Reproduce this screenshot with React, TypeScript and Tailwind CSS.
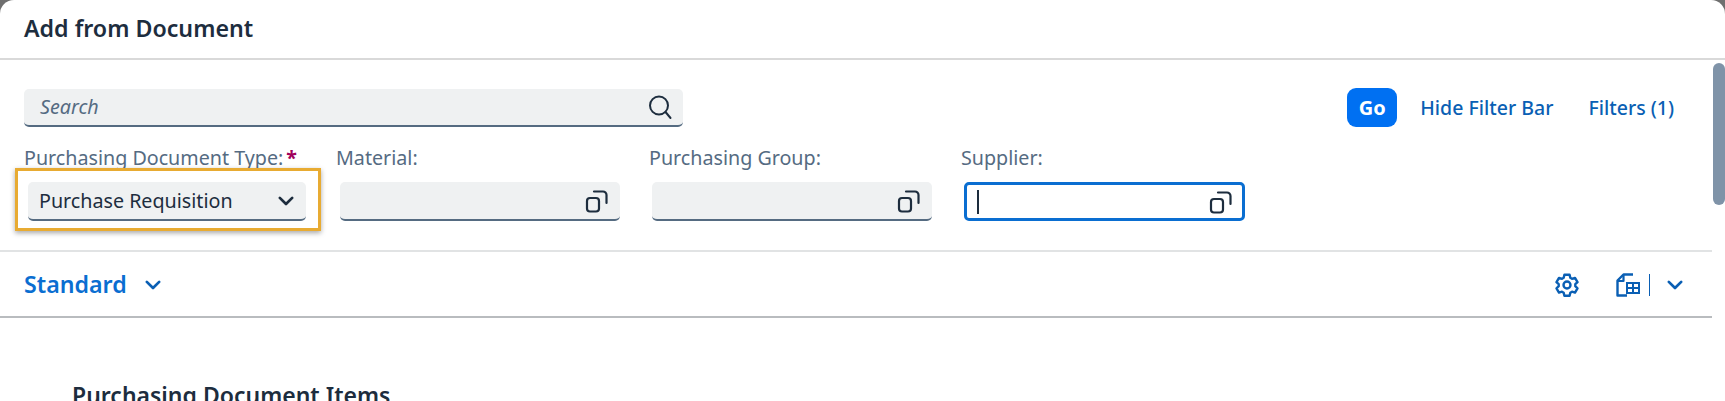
const FONT = "font-['Noto_Sans','Open_Sans',sans-serif]";

function ValueHelpIcon() {
    return (
        <svg width="24" height="24" viewBox="0 0 24 24" fill="none" stroke="#1d2d3e" strokeWidth="2.200" className="block">
            <rect x="2" y="9" width="12" height="13.500" rx="3" />
            <path d="M9 2.500h9a3.500 3.500 0 0 1 3.500 3.500V14" strokeLinecap="round" />
        </svg>
    );
}

function Chevron({ color, size = 16 }: { color: string; size?: number }) {
    return (
        <svg width={size} height={size} viewBox="0 0 16 16" fill="none" className="block">
            <path d="M2.500 5.200L8 10.700l5.500-5.500" stroke={color} strokeWidth="2.400" strokeLinecap="round" strokeLinejoin="round" />
        </svg>
    );
}

function GearIcon() {
    return (
        <svg width="24" height="24" viewBox="0 0 24 24" fill="none" stroke="#0a5fb4" strokeWidth="2.400" strokeLinejoin="round" className="block">
            <path d="M9.400 1.800h5.200l.7 3 1.700 1 3-.9 2.500 4.200-2.200 2.100v2l2.200 2.100-2.500 4.300-3-.9-1.700 1-.7 3H9.400l-.7-3-1.700-1-3 .9-2.500-4.300 2.200-2.100v-2L1.500 9.100 4 4.900l3 .9 1.700-1z" />
            <circle cx="12" cy="12" r="3.500" />
        </svg>
    );
}

function ExportTableIcon() {
    return (
        <svg width="24" height="24" viewBox="0 0 24 24" fill="none" stroke="#0a5fb4" className="block">
            <path d="M17 1.500H7.500L1.500 7.500V22.500H11" strokeWidth="2.400" strokeLinejoin="round" />
            <path d="M7.500 2V8H2" strokeWidth="2.200" strokeLinejoin="round" />
            <rect x="11" y="10" width="12" height="10" fill="#fff" strokeWidth="2" />
            <path d="M17 10v10M11 15h12" strokeWidth="2" />
        </svg>
    );
}

function Field({ label, width, focused, inset = "ml-[4px]" }: { label: string; width: string; focused?: boolean; inset?: string }) {
    return (
        <div className={`flex flex-col ${width}`}>
            <span className="text-[19.700px] leading-[24px] text-[#556b82] whitespace-nowrap">{label}</span>
            <div
                className={
                    focused
                        ? "mt-[12px] ml-[3px] h-[39px] w-[281px] rounded-[5px] border-[3px] border-[#0a6ed1] bg-white flex items-center justify-between pl-[10px] pr-[9px]"
                        : `mt-[12px] ${inset} h-[39px] w-[280px] rounded-[5px] bg-[#eff1f2] border-b-2 border-[#556b81] flex items-center justify-end pr-[11px]`
                }
            >
                {focused && <span className="block h-[24px] w-[2px] bg-[#1d2d3e]" />}
                <ValueHelpIcon />
            </div>
        </div>
    );
}

export default function App() {
    return (
        <div className={`${FONT} w-[1725px] h-[401px] overflow-hidden bg-[#6f6f6f]`}>
            <div className="relative h-full bg-white rounded-t-[14px] overflow-hidden">
                <header className="h-[60px] border-b-2 border-[#d9d9d9] pl-[24px] flex items-center">
                    <h1 className="text-[23.200px] font-semibold leading-none text-[#1d2d3e]">Add from Document</h1>
                </header>

                {/* scrollbar thumb */}
                <div className="absolute right-0 top-[63px] h-[142px] w-[12px] rounded-[6px] bg-[#7f93a8]" />

                <section className="h-[192px] mr-[13px] border-b-2 border-[#e1e3e4] pl-[24px] pt-[28px]">
                    <div className="flex items-center justify-between">
                        <div className="w-[659px] h-[38px] rounded-[5px] bg-[#eff1f2] border-b-2 border-[#556b81] flex items-center justify-between pl-[16px] pr-[10px]">
                            <span className="text-[19.700px] italic text-[#556b82]">Search</span>
                            <svg width="26" height="26" viewBox="0 0 26 26" fill="none" stroke="#1d2d3e" strokeWidth="2" className="block">
                                <circle cx="12" cy="11.500" r="9" />
                                <path d="M18.500 18l5 6" strokeLinecap="round" />
                            </svg>
                        </div>
                        <div className="flex items-center pr-[38px]">
                            <button className="w-[50px] h-[39px] rounded-[9px] bg-[#0070f2] text-white font-bold text-[20px] leading-none">Go</button>
                            <span className="ml-[23px] text-[19.500px] font-medium text-[#0a5fb4]">Hide Filter Bar</span>
                            <span className="ml-[35px] text-[19.500px] font-medium text-[#0a5fb4]">Filters (1)</span>
                        </div>
                    </div>
                    <div className="flex mt-[19px]">
                        <div className="flex flex-col w-[312px]">
                            <span className="text-[19.700px] leading-[24px] text-[#556b82] whitespace-nowrap">
                                Purchasing Document Type:<span className="font-bold ml-[3px] text-[#a1005b]">*</span>
                            </span>
                            <div className="relative mt-[12px] ml-[4px] h-[39px] w-[278px] rounded-[5px] bg-[#eff1f2] border-b-2 border-[#556b81] flex items-center justify-between pl-[11px] pr-[11px]">
                                <span className="text-[19.700px] text-[#1d2d3e]">Purchase Requisition</span>
                                <Chevron color="#1d2d3e" size={18} />
                                {/* highlight annotation */}
                                <div className="absolute -left-[13px] -top-[14px] h-[63px] w-[306px] border-[3px] border-[#e8ab32] shadow-[0_2px_5px_rgba(0,0,0,0.35)]" />
                            </div>
                        </div>
                        <Field label="Material:" width="w-[313px]" />
                        <Field label="Purchasing Group:" width="w-[312px]" inset="ml-[3px]" />
                        <Field label="Supplier:" width="w-[290px]" focused />
                    </div>
                </section>

                <section className="h-[66px] mr-[13px] border-b-2 border-[#b9bcbf] pl-[24px] pr-[28px] pt-[2px] flex items-center justify-between">
                    <div className="flex items-center">
                        <span className="text-[23.200px] font-semibold text-[#0a6ed1] leading-none">Standard</span>
                        <span className="ml-[17px]"><Chevron color="#0a5fb4" size={18} /></span>
                    </div>
                    <div className="flex items-center">
                        <GearIcon />
                        <span className="ml-[37px]"><ExportTableIcon /></span>
                        <span className="ml-[9px] h-[22px] w-[1px] bg-[#0a5fb4]" />
                        <span className="ml-[16px]"><Chevron color="#0a5fb4" size={18} /></span>
                    </div>
                </section>

                <h2 className="pl-[72px] pt-[64px] text-[23px] font-semibold text-[#1d2d3e] leading-[26px] whitespace-nowrap">Purchasing Document Items</h2>
            </div>
        </div>
    );
}
